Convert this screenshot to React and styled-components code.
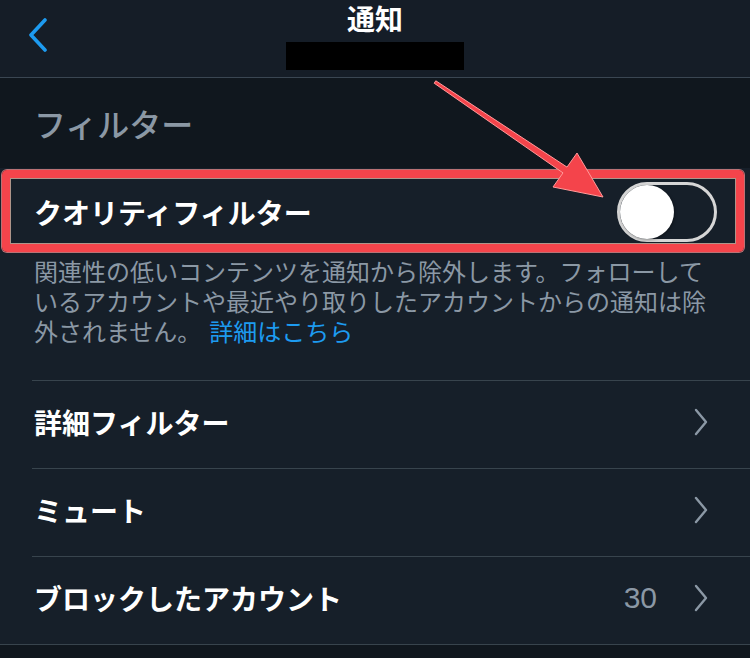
import React from 'react';
import styled, {createGlobalStyle} from 'styled-components';

const GlobalStyle = createGlobalStyle`
  html, body {
    margin: 0;
    padding: 0;
    background: #10171e;
  }
  body {
    font-family: "Noto Sans CJK JP", "Noto Sans", sans-serif;
    -webkit-font-smoothing: antialiased;
  }
`;

const Page = styled.div`
  position: relative;
  width: 750px;
  height: 658px;
  overflow: hidden;
  background: #10171e;
`;

const Header = styled.div`
  height: 77px;
  background: #151d27;
  border-bottom: 1px solid #3a4652;
  display: flex;
  align-items: flex-start;
`;

const BackButton = styled.div`
  width: 80px;
  padding: 18px 0 0 26px;
  box-sizing: border-box;
`;

const TitleBlock = styled.div`
  flex: 1;
  display: flex;
  flex-direction: column;
  align-items: center;
  margin-right: 80px;
  padding-top: 2px;
`;

const Title = styled.div`
  color: #fff;
  font-size: 28px;
  font-weight: 700;
  line-height: 32px;
`;

const Redacted = styled.div`
  width: 178px;
  height: 28px;
  background: #000;
  margin-top: 8px;
`;

const SectionHeader = styled.div`
  height: 90px;
  display: flex;
  align-items: center;
  padding-left: 34px;
  color: #8b98a5;
  font-size: 32px;
  font-weight: 500;
  background: #10171e;
`;

const Body = styled.div`
  background: #161f29;
`;

const ToggleRow = styled.div`
  height: 88px;
  display: flex;
  align-items: center;
  justify-content: space-between;
  padding: 0 33px 0 34px;
`;

const Label = styled.div`
  color: #fff;
  font-size: 28px;
  font-weight: 700;
`;

const Track = styled.div`
  width: 100px;
  height: 60px;
  box-sizing: border-box;
  border: 3px solid #d6d6d6;
  border-radius: 30px;
  display: flex;
  align-items: center;
`;

const Knob = styled.div`
  width: 54px;
  height: 54px;
  border-radius: 50%;
  background: #fff;
  box-shadow: 1px 1px 3px rgba(0, 0, 0, 0.35);
`;

const Description = styled.p`
  margin: 0;
  padding: 0 32px 34px 34px;
  color: #8b98a5;
  font-size: 24px;
  line-height: 30px;
`;

const LearnMore = styled.span`
  color: #1d9bf0;
  margin-left: 8px;
`;

const Row = styled.div`
  height: 88px;
  box-sizing: border-box;
  margin-left: 32px;
  padding: 0 41px 5px 2px;
  border-top: 1px solid #38444d;
  display: flex;
  align-items: center;
`;

const Spacer = styled.div`
  flex: 1;
`;

const Count = styled.span`
  color: #8b98a5;
  font-size: 30px;
  font-family: "Liberation Sans", "Noto Sans", sans-serif;
  margin-right: 36px;
`;

const BottomLine = styled.div`
  height: 1px;
  background: #38444d;
`;

const Overlay = styled.div`
  position: absolute;
  inset: 0;
  pointer-events: none;
`;

const Highlight = styled.div`
  position: absolute;
  left: 2px;
  top: 170px;
  width: 742px;
  height: 82px;
  box-sizing: border-box;
  border: 8px solid #f4444b;
  border-radius: 5px;
  box-shadow: 0 0 0 1px rgba(255, 150, 150, 0.7), inset 0 0 0 1px rgba(240, 200, 180, 0.7);
`;

const ArrowSvg = styled.svg`
  position: absolute;
  left: 0;
  top: 0;
`;

const Chevron = () => (
  <svg width="16" height="28" viewBox="0 0 16 28">
    <path d="M3 2 L13 14 L3 26" fill="none" stroke="#8b98a5" strokeWidth="2.4" strokeLinecap="round" strokeLinejoin="round" />
  </svg>
);

const BackIcon = () => (
  <svg width="24" height="36" viewBox="0 0 24 36">
    <path d="M19 2 L5 17 L19 32" fill="none" stroke="#1d9bf0" strokeWidth="3.6" strokeLinecap="round" strokeLinejoin="round" />
  </svg>
);

const rows = [
  {label: '詳細フィルター'},
  {label: 'ミュート'},
  {label: 'ブロックしたアカウント', count: 30},
];

export default function App() {
  return (
    <Page>
      <GlobalStyle />
      <Header>
        <BackButton><BackIcon /></BackButton>
        <TitleBlock>
          <Title>通知</Title>
          <Redacted />
        </TitleBlock>
      </Header>
      <SectionHeader>フィルター</SectionHeader>
      <Body>
        <ToggleRow>
          <Label>クオリティフィルター</Label>
          <Track><Knob /></Track>
        </ToggleRow>
        <Description>
          関連性の低いコンテンツを通知から除外します。フォローしているアカウントや最近やり取りしたアカウントからの通知は除外されません。
          <LearnMore>詳細はこちら</LearnMore>
        </Description>
        {rows.map(item => (
          <Row key={item.label}>
            <Label>{item.label}</Label>
            <Spacer />
            {item.count != null && <Count>{item.count}</Count>}
            <Chevron />
          </Row>
        ))}
        <BottomLine />
      </Body>
      <Overlay>
        <Highlight />
        <ArrowSvg width="750" height="658" viewBox="0 0 750 658">
          <polygon
            points="435.8,80.8 567,167.1 577,153 603,197 553,187 563,172.9 434.2,83.2"
            fill="#f4444b"
            stroke="#ff9a9a"
            strokeWidth="1"
            strokeLinejoin="round"
          />
        </ArrowSvg>
      </Overlay>
    </Page>
  );
}
